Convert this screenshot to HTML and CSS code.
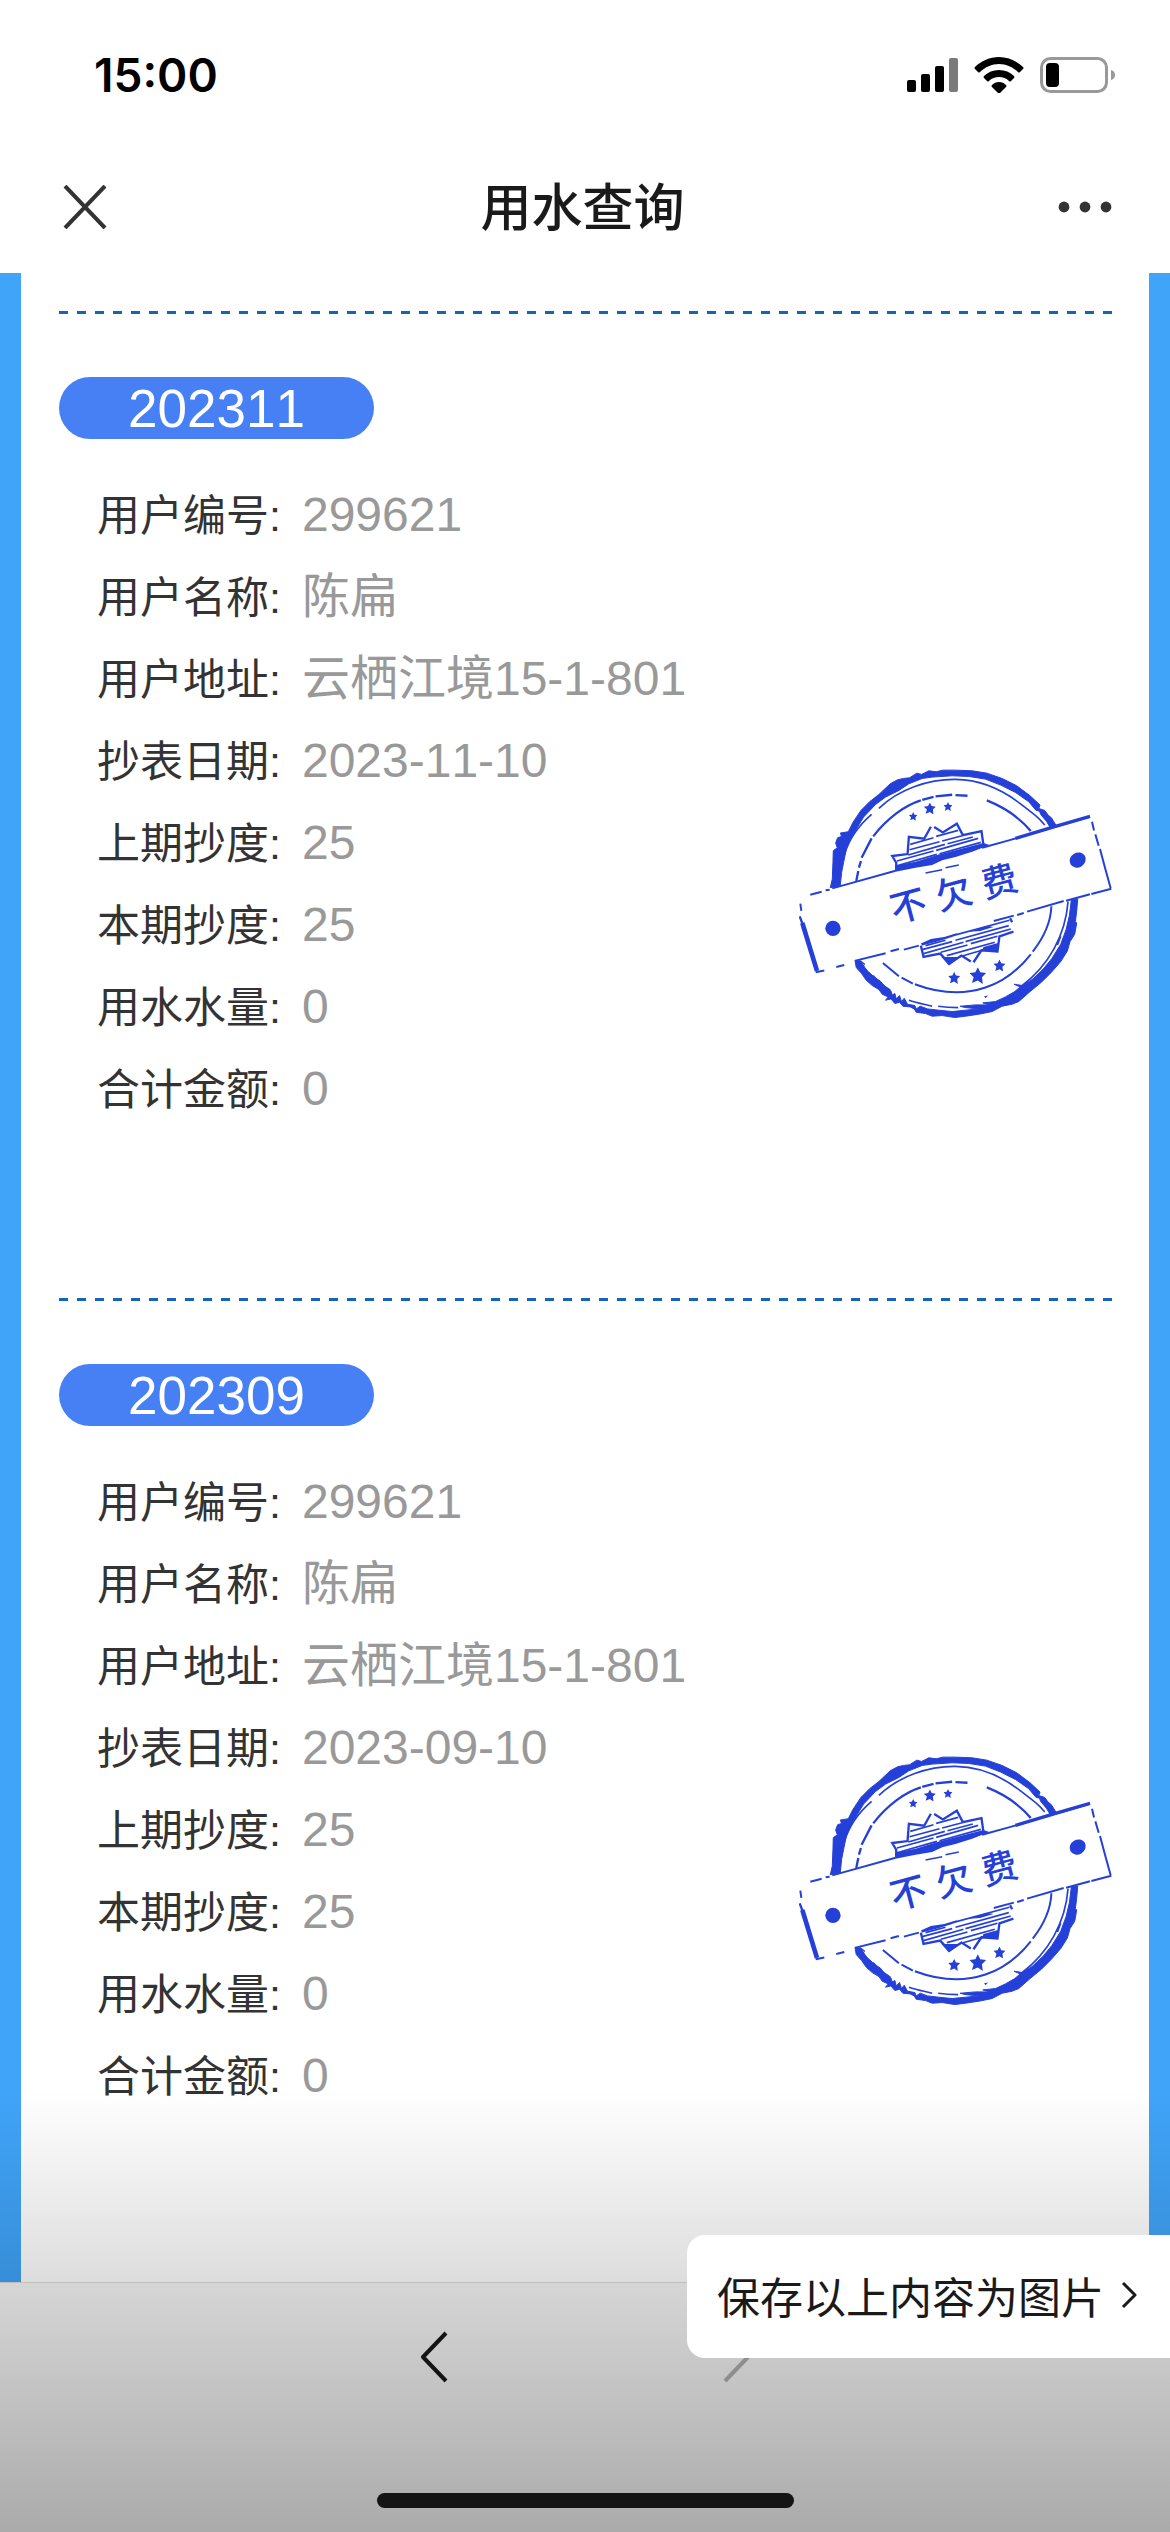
FILE: index.html
```html
<!DOCTYPE html>
<html lang="zh-CN">
<head>
    <meta charset="UTF-8">
    <meta name="viewport" content="width=device-width, initial-scale=1.0">
    <title>用水查询</title>
    <link rel="stylesheet" href="styles.css">
</head>
<body>
    <svg width="0" height="0" class="defs">
        <symbol id="star" viewBox="0 0 20 20">
            <path d="M10 0l3 6 7 1-5 5 1 8-6-4-7 3 2-7-5-5 7-1z"/>
        </symbol>
        <symbol id="stamp" viewBox="50 60 940 750">
            <!-- outer ring, upper half -->
            <path fill="#2540d8" stroke="#2540d8" stroke-width="3" d="M144 416L150 390 152 340 153 305 165 296 160 282 166 266 178 262 174 252 198 248 212 220 236 184 262 158 290 136 324 104 346 92 364 88 382 86 404 72 418 76 440 65 462 68 482 63 520 63 570 65 614 72 660 88 704 110 744 140 774 168 770 178 788 184 798 198 808 206 824 232 806 238 794 218 776 196 772 186 762 184 740 158 700 130 656 108 610 90 560 82 510 80 450 84 420 88 380 104 350 124 310 144 280 166 244 204 222 240 204 272 192 300 184 340 178 370 174 410z"/>
            <!-- outer ring, lower half -->
            <path fill="#2540d8" stroke="#2540d8" stroke-width="3" d="M218 634L236 636 248 646 238 644 256 666 280 688 294 696 310 716 326 726 330 738 338 734 342 750 352 740 358 758 366 748 376 766 398 770 402 780 414 772 436 780 470 784 510 788 550 784 590 780 548 776 534 772 580 768 622 768 602 762 640 758 670 744 698 728 714 714 696 706 722 710 750 692 782 662 810 628 836 586 852 542 862 500 868 452 887 450 884 486 880 518 884 522 878 556 864 578 856 606 836 638 808 670 778 700 744 728 710 758 690 766 660 772 630 788 590 796 550 802 518 806 480 800 450 802 430 794 402 790 396 780 384 774 362 772 352 760 338 764 326 750 310 754 318 744 300 736 290 722 270 710 252 694 238 674 222 656z"/>
            <g fill="none" stroke="#2540d8">
                <!-- thin rings -->
                <path stroke-width="5" d="M290 178C350 120 440 90 520 91S660 122 712 162 770 206 788 228M186 318C200 270 226 232 268 196M232 640l14 14M272 680l12 12M292 702l32 22M380 754c24 8 46 12 70 18M468 772c20 3 40 4 60 4M718 712C800 650 850 560 858 458M836 562l-10 26"/>
                <path stroke-width="7" d="M222 396l6-30M230 356l6-20M238 326L268 268M273 262C316 206 370 168 416 154M420 152l34-9M460 142l50-5M520 138l36 2M614 154c56 22 100 54 132 92"/>
                <path stroke-width="6" d="M302 642l48 40M358 686l34 18M398 706c80 30 152 30 212 10s100-54 136-100M752 608c38-48 54-90 56-136"/>
                <!-- banner edges -->
                <path stroke-width="6" d="M84 437l34-9M130 424l12-2M150 418l190-53M600 296l80-22 240-70M930 218l6 26M940 256l10 34M954 300l16 60 16 58M988 419l-60 16M924 436l-72 19M845 456l-110 32M725 492l-20 6M695 500l-60 16M410 590l-45 12M350 600l-25 7M310 613l-90 22M186 648l-24 6M126 665l-26 5M54 464l3 22"/>
                <path stroke-width="10" d="M700 268l120-36 104-30"/>
                <path stroke-width="14" d="M60 522l44 144"/>
                <path stroke-width="7" d="M52 502l10 26"/>
                <!-- badge, upper half -->
                <path stroke-width="7" d="M342 365l0-24-12-20 46-6 4-52 46 6 20-36M456 234l26 16 42-26 18 34 56-12 6 42"/>
                <path stroke-width="5" d="M384 286l70-20M462 262l66-18M382 302l90-24M480 276l60-16M378 318l110-32M496 284l76-20M344 336l110-30M462 304l126-36M344 350l120-34M472 314l124-34M430 372l50-10M490 356l40-8"/>
                <!-- badge, lower half -->
                <path stroke-width="7" d="M416 590l8 34 50-10 28 30 36-24 28 18M574 640l24-36 48 4 6-46 42-14M690 520l-6-12"/>
                <path stroke-width="5" d="M420 602l90-24M520 574l160-44M424 614l120-34M550 578l136-38M476 610l80-22M566 584l80-22M494 620l144-40M530 624l90-26M430 590l60-16M512 560l170-46"/>
            </g>
            <g fill="#2540d8">
                <path d="M338 350L400 338 470 316 540 298 604 282 622 288 570 308 520 324 480 334 450 348 400 356 340 368z"/>
                <path d="M416 584l30-14 40-6 40-12-16 12-44 14-46 12zM478 624l56 0-34 26zM604 594l44-12-2 28-46-6zM560 548l54-18 20 4-40 12z"/>
                <ellipse cx="887" cy="333" rx="25" ry="22" transform="rotate(-30 887 333)"/>
                <circle cx="152" cy="538" r="23"/>
                <use href="#star" x="380" y="189" width="26" height="26"/>
                <use href="#star" x="425" y="160" width="36" height="36"/>
                <use href="#star" x="484" y="159" width="27" height="27"/>
                <use href="#star" x="498" y="669" width="36" height="36"/>
                <use href="#star" x="562" y="655" width="50" height="50"/>
                <use href="#star" x="634" y="632" width="36" height="36"/>
                <path d="M606 742l12-2-8 8z"/>
            </g>
        </symbol>
    </svg>

    <div class="page">
        <header class="header">
            <div class="status">
                <span class="time">15:00</span>
                <div class="status-icons">
                    <svg width="51" height="36" viewBox="0 0 51 36">
                        <rect x="0" y="23" width="9" height="12" rx="2"/>
                        <rect x="14" y="17" width="9" height="18" rx="2"/>
                        <rect x="28" y="9" width="9" height="26" rx="2"/>
                        <rect x="42" y="1" width="9" height="34" rx="2" fill="#7a7a7a"/>
                    </svg>
                    <svg width="50" height="36" viewBox="0 0 50 36">
                        <path d="M25 0c9 0 18 4 24 10q1 1 0 2l-3 3q-1 1-2 0c-5-5-12-8-19-8s-14 3-19 8q-1 1-2 0l-3-3q-1-1 0-2c6-6 15-10 24-10z"/>
                        <path d="M25 13c6 0 11 2 15 6q1 1 0 2l-3 3q-1 1-2 0c-3-3-6-4-10-4s-7 1-10 4q-1 1-2 0l-3-3q-1-1 0-2c4-4 9-6 15-6z"/>
                        <path d="M25 25c3 0 5 1 7 3q1 1 0 2l-6 6q-1 1-2 0l-6-6q-1-1 0-2c2-2 4-3 7-3z"/>
                    </svg>
                    <svg width="76" height="36" viewBox="0 0 76 36">
                        <rect x="1.5" y="1.5" width="65" height="33" rx="9" fill="none" stroke="#999" stroke-width="3"/>
                        <rect x="6" y="6" width="13" height="24" rx="4"/>
                        <path d="M71 13q4 1 4 5t-4 5z" fill="#999"/>
                    </svg>
                </div>
            </div>
            <nav class="nav">
                <button class="icon-btn" aria-label="关闭">
                    <svg width="44" height="44" viewBox="0 0 44 44" fill="none" stroke="#333" stroke-width="4"><path d="M2 1l40 42M42 1L2 43"/></svg>
                </button>
                <h1>用水查询</h1>
                <button class="icon-btn" aria-label="更多">
                    <svg width="54" height="12" viewBox="0 0 54 12" fill="#333"><circle cx="6" cy="6" r="5.4"/><circle cx="27" cy="6" r="5.4"/><circle cx="48" cy="6" r="5.4"/></svg>
                </button>
            </nav>
        </header>

        <main class="content">
            <section class="record">
                <h2 class="period">202311</h2>
                <div class="record-body">
                    <dl class="info">
                        <div><dt>用户编号:</dt><dd>299621</dd></div>
                        <div><dt>用户名称:</dt><dd>陈扁</dd></div>
                        <div><dt>用户地址:</dt><dd>云栖江境15-1-801</dd></div>
                        <div><dt>抄表日期:</dt><dd>2023-11-10</dd></div>
                        <div><dt>上期抄度:</dt><dd>25</dd></div>
                        <div><dt>本期抄度:</dt><dd>25</dd></div>
                        <div><dt>用水水量:</dt><dd>0</dd></div>
                        <div><dt>合计金额:</dt><dd>0</dd></div>
                    </dl>
                    <svg class="stamp" viewBox="0 0 313 250">
                        <use href="#stamp"/>
                        <text transform="rotate(-15 157 125)" x="108 155 202" y="137">不欠费</text>
                    </svg>
                </div>
            </section>

            <section class="record">
                <h2 class="period">202309</h2>
                <div class="record-body">
                    <dl class="info">
                        <div><dt>用户编号:</dt><dd>299621</dd></div>
                        <div><dt>用户名称:</dt><dd>陈扁</dd></div>
                        <div><dt>用户地址:</dt><dd>云栖江境15-1-801</dd></div>
                        <div><dt>抄表日期:</dt><dd>2023-09-10</dd></div>
                        <div><dt>上期抄度:</dt><dd>25</dd></div>
                        <div><dt>本期抄度:</dt><dd>25</dd></div>
                        <div><dt>用水水量:</dt><dd>0</dd></div>
                        <div><dt>合计金额:</dt><dd>0</dd></div>
                    </dl>
                    <svg class="stamp" viewBox="0 0 313 250">
                        <use href="#stamp"/>
                        <text transform="rotate(-15 157 125)" x="108 155 202" y="137">不欠费</text>
                    </svg>
                </div>
            </section>
            <div class="scrollbar"></div>
        </main>

        <footer class="toolbar">
            <div class="toolbar-buttons">
                <button class="icon-btn" aria-label="后退">
                    <svg width="28" height="52" viewBox="0 0 28 52" fill="none" stroke="#141414" stroke-width="4" stroke-linejoin="round"><path d="M26 2L3 26l23 24"/></svg>
                </button>
                <button class="icon-btn" aria-label="前进">
                    <svg width="28" height="52" viewBox="0 0 28 52" fill="none" stroke="#8e8e8e" stroke-width="4" stroke-linejoin="round"><path d="M2 2l23 24L2 50"/></svg>
                </button>
            </div>
            <div class="home-bar"></div>
        </footer>

        <button class="save">
            保存以上内容为图片
            <svg width="16" height="28" viewBox="0 0 16 28" fill="none" stroke="#1a1a1a" stroke-width="3" stroke-linejoin="round"><path d="M2 2l12 12L2 26"/></svg>
        </button>
    </div>
</body>
</html>
```
FILE: styles.css
```css
* {
    box-sizing: border-box;
    margin: 0;
    padding: 0;
}

body {
    font-family: "Liberation Sans", "Noto Sans CJK SC", sans-serif;
    font-kerning: none;
    background: #fff;
    color: #333;
}

.defs {
    position: absolute;
}

.page {
    position: relative;
    display: flex;
    flex-direction: column;
    height: 100vh;
    overflow: hidden;
}

/* status bar + title */
.header {
    padding-bottom: 9px;
}

.status {
    display: flex;
    justify-content: space-between;
    align-items: center;
    height: 150px;
    padding: 0 54px 0 94px;
    color: #000;
}

.time {
    font-family: Inter, sans-serif;
    font-size: 46px;
    font-weight: 600;
    font-kerning: auto;
}

.status-icons {
    display: flex;
    gap: 16px;
}

.nav {
    display: flex;
    justify-content: space-between;
    align-items: center;
    height: 114px;
    padding: 0 58px 0 63px;
}

.nav h1 {
    padding-bottom: 6px;
    color: #1a1a1a;
    font-size: 51px;
    font-weight: 500;
}

.icon-btn {
    display: flex;
    border: none;
    background: none;
    cursor: pointer;
}

/* bills */
.content {
    position: relative;
    flex: 1;
    min-height: 0;
    overflow: hidden;
    padding: 38px 37px 0 38px;
    border: solid #40a4f9;
    border-width: 0 21px;
}

.record {
    padding: 66px 0 168px;
    background: repeating-linear-gradient(90deg, #1464b8 0 9px, transparent 9px 18px) top / 100% 3px no-repeat;
}

.period {
    width: 315px;
    height: 62px;
    margin-bottom: 35px;
    border-radius: 31px;
    background: #4680f4;
    color: #fff;
    font-size: 53px;
    font-weight: 400;
    line-height: 64px;
    text-align: center;
}

.record-body {
    display: flex;
    justify-content: space-between;
    align-items: flex-end;
}

.info {
    padding-left: 38px;
}

.info div {
    display: flex;
    align-items: baseline;
    gap: 21px;
    height: 82px;
    line-height: 82px;
}

.info dt {
    font-size: 43px;
}

.info dd {
    color: #999;
    font-size: 48px;
}

.stamp {
    width: 313px;
    height: 250px;
    margin-bottom: 111px;
}

.stamp text {
    fill: #2540d8;
    font-size: 36px;
    font-weight: 500;
    text-anchor: middle;
}

.scrollbar {
    position: absolute;
    top: 330px;
    right: -12px;
    width: 9px;
    height: 544px;
    border-radius: 5px;
    background: #3a99e6;
}

/* bottom bar */
.toolbar {
    display: flex;
    flex-direction: column;
    justify-content: space-between;
    align-items: center;
    height: 250px;
    padding: 48px 0 24px;
    border-top: 1px solid #dcdcdc;
    background: #f7f7f7;
}

.toolbar-buttons {
    display: flex;
    gap: 275px;
}

.toolbar-buttons,
.home-bar {
    position: relative;
    z-index: 1;
}

.home-bar {
    width: 417px;
    height: 15px;
    border-radius: 8px;
    background: #141414;
}

/* shade rising from the bottom edge */
.page::after {
    content: "";
    position: absolute;
    inset: auto 0 0;
    height: 442px;
    background: linear-gradient(transparent, rgba(0, 0, 0, 0.31));
    pointer-events: none;
}

.save {
    position: absolute;
    right: 0;
    bottom: 174px;
    z-index: 2;
    display: flex;
    align-items: center;
    gap: 17px;
    height: 123px;
    padding: 0 33px 4px 30px;
    border: none;
    border-radius: 18px 0 0 18px;
    background: #fff;
    color: #1a1a1a;
    font-family: inherit;
    font-size: 43px;
    cursor: pointer;
}
```
